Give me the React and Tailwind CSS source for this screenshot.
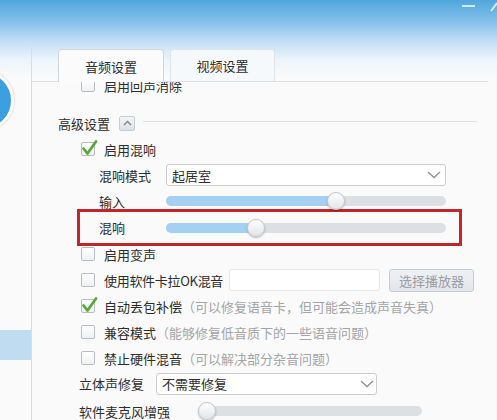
import React from "react";

const Box = ({ checked }) => (
  <span className="relative w-[14px] h-[14px] shrink-0 rounded-[2px] border border-[#b7bcc2] bg-gradient-to-b from-white to-[#f0f1f2]">
    {checked && (
      <svg className="absolute left-[-1px] top-[-4px] w-[18px] h-[18px]" viewBox="0 0 18 18">
        <path d="M2.5 9.5 L6.5 14.5 L15 2.5" fill="none" stroke="#5ba73a" strokeWidth="2.8" strokeLinecap="round" strokeLinejoin="round" />
      </svg>
    )}
  </span>
);

const Chevron = () => (
  <svg className="w-[14px] h-[8px]" viewBox="0 0 14 8">
    <path d="M1 1 L7 6.5 L13 1" fill="none" stroke="#8c8f93" strokeWidth="1.3" />
  </svg>
);

const Thumb = ({ className }) => (
  <span className={`absolute top-[-4px] w-[18px] h-[18px] rounded-full border border-[#c2c6cb] bg-gradient-to-b from-white to-[#e2e4e7] shadow-[0_1px_2px_rgba(0,0,0,0.25)] ${className}`} />
);

export default function App() {
  return (
    <div className="w-[497px] h-[420px] overflow-hidden relative flex bg-[linear-gradient(to_bottom,#4fa6de_0px,#86c1ea_22px,#c3e0f4_42px,#ecf5fb_60px,#fafafa_78px)] font-['Noto_Sans_CJK_SC',sans-serif] text-[13px] leading-none text-[#2c2c2c]">
      {/* avatar, cut by the window edge */}
      <div className="absolute left-[-47px] top-[70px] w-[61px] h-[61px] rounded-full bg-[#3b9fe0] border-[3px] border-white shadow-[0_0_3px_rgba(0,0,0,0.2)]" />

      {/* left rail */}
      <aside className="w-[32px] shrink-0 flex flex-col">
        <div className="h-[47px]" />
        <div className="flex-1 border-r border-[#d9dcdf] pt-[283px]">
          <div className="h-[30px] bg-[#bfdcf0]" />
        </div>
      </aside>

      <main className="flex-1 min-w-0 flex flex-col">
        {/* window buttons */}
        <div className="h-[49px] shrink-0 flex justify-end items-start pt-[5px] gap-[15px]">
          <span className="w-[13px] h-[2px] bg-[#d3eafa]" />
          <svg className="w-[7px] h-[10px] -mt-[3px]" viewBox="0 0 7 10">
            <path d="M1 9 L7 1" stroke="#d3eafa" strokeWidth="2" />
          </svg>
        </div>

        {/* tabs */}
        <div className="h-[33px] shrink-0 flex items-end gap-[6px] pl-[26px] mr-[9px] border-b border-[#dfe2e5]">
          <div className="w-[106px] h-[33px] -mb-px rounded-t-[4px] border border-b-0 border-[#d2d6da] bg-[#fbfbfb] flex items-center justify-center">
            音频设置
          </div>
          <div className="w-[105px] h-[32px] rounded-t-[4px] border border-b-0 border-[#dfe3e7] bg-[#f6f9fb] flex items-center justify-center">
            视频设置
          </div>
        </div>

        {/* scrolled settings */}
        <div className="flex-1 overflow-hidden bg-[#fafafa]">
          <div className="-mt-[10px] pl-[26px] flex flex-col">
            <div className="h-[26px] flex items-center pl-[23px] gap-[9px]">
              <Box />
              <span>启用回声消除</span>
            </div>

            <div className="mt-[12px] h-[26px] flex items-center">
              <span>高级设置</span>
              <span className="ml-[9px] w-[16px] h-[15px] rounded-[2px] border border-[#c6ccd3] bg-gradient-to-b from-[#f3f5f7] to-[#dde2e8] flex items-center justify-center">
                <svg className="w-[9px] h-[6px]" viewBox="0 0 9 6">
                  <path d="M1 5 L4.5 1.5 L8 5" fill="none" stroke="#7d8690" strokeWidth="1.4" />
                </svg>
              </span>
              <span className="flex-1 ml-[8px] mr-[20px] h-px bg-[#e2e2e2] -mt-[4px]" />
            </div>

            <div className="h-[26px] flex items-center pl-[23px] gap-[9px]">
              <Box checked />
              <span>启用混响</span>
            </div>

            <div className="h-[26px] flex items-center pl-[41px]">
              <span className="w-[67px]">混响模式</span>
              <div className="w-[280px] h-[22px] rounded-[3px] border border-[#c9ccd0] bg-white flex items-center justify-between pl-[5px] pr-[4px]">
                <span>起居室</span>
                <Chevron />
              </div>
            </div>

            <div className="h-[26px] flex items-center pl-[41px]">
              <span className="w-[67px]">输入</span>
              <div className="relative w-[280px] h-[10px] rounded-full bg-[#dce0e5]">
                <div className="w-[170px] h-[10px] rounded-full bg-[#a4d1f1]" />
                <Thumb className="left-[161px]" />
              </div>
            </div>

            <div className="ml-[24px] w-[375px] h-[27px] flex items-center pl-[17px] outline-3 outline-solid outline-offset-2 outline-[#c2262d]">
              <span className="w-[67px]">混响</span>
              <div className="relative w-[280px] h-[10px] rounded-full bg-[#dce0e5]">
                <div className="w-[90px] h-[10px] rounded-full bg-[#a4d1f1]" />
                <Thumb className="left-[81px]" />
              </div>
            </div>

            <div className="h-[26px] flex items-center pl-[23px] gap-[9px]">
              <Box />
              <span>启用变声</span>
            </div>

            <div className="h-[26px] flex items-center pl-[23px]">
              <Box />
              <span className="ml-[9px] w-[125px] shrink-0 whitespace-nowrap tracking-[-0.3px]">使用软件卡拉OK混音</span>
              <div className="w-[151px] h-[22px] rounded-[3px] border border-[#e6e7e9] bg-white" />
              <div className="ml-[9px] w-[85px] h-[23px] rounded-[3px] border border-[#c6cdd5] bg-gradient-to-b from-[#eef1f4] to-[#e2e6eb] text-[#9a9ea3] flex items-center justify-center">
                选择播放器
              </div>
            </div>

            <div className="h-[26px] flex items-center pl-[23px] gap-[9px]">
              <Box checked />
              <span>
                自动丢包补偿<span className="text-[#a3a5a8]">（可以修复语音卡，但可能会造成声音失真）</span>
              </span>
            </div>

            <div className="h-[26px] flex items-center pl-[23px] gap-[9px]">
              <Box />
              <span>
                兼容模式<span className="text-[#a3a5a8]">（能够修复低音质下的一些语音问题）</span>
              </span>
            </div>

            <div className="h-[26px] flex items-center pl-[23px] gap-[9px]">
              <Box />
              <span>
                禁止硬件混音<span className="text-[#a3a5a8]">（可以解决部分杂音问题）</span>
              </span>
            </div>

            <div className="h-[25px] flex items-center pl-[21px]">
              <span className="w-[77px]">立体声修复</span>
              <div className="w-[221px] h-[22px] rounded-[3px] border border-[#c9ccd0] bg-white flex items-center justify-between pl-[5px] pr-[2px]">
                <span>不需要修复</span>
                <Chevron />
              </div>
            </div>

            <div className="h-[30px] flex items-center pl-[21px]">
              <span className="w-[119px]">软件麦克风增强</span>
              <div className="relative w-[224px] h-[10px] rounded-full bg-[#dce0e5]">
                <Thumb className="left-0" />
              </div>
            </div>
          </div>
        </div>
      </main>
    </div>
  );
}
